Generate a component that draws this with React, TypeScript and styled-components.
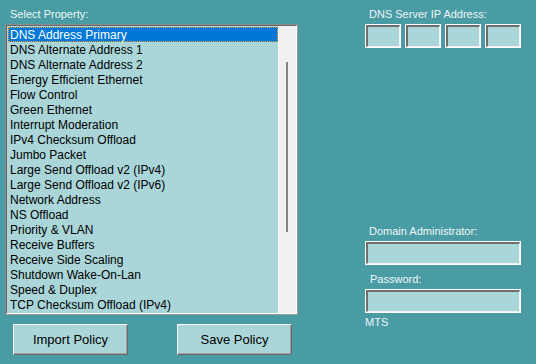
import React from "react";
import styled, { createGlobalStyle } from "styled-components";

const Global = createGlobalStyle`
  html, body { margin: 0; padding: 0; }
  body { background: #4a9ca4; font-family: "Liberation Sans", Arial, sans-serif; }
`;

const Window = styled.div`
  width: 536px;
  height: 364px;
  background: #4a9ca4;
  display: flex;
  box-sizing: border-box;
  overflow: hidden;
`;

const LeftColumn = styled.div`
  display: flex;
  flex-direction: column;
  padding: 8px 0 0 5px;
  width: 300px;
`;

const RightColumn = styled.div`
  display: flex;
  flex-direction: column;
  padding: 8px 0 0 60px;
  width: 160px;
`;

const Label = styled.div<{ $indent?: number }>`
  font-size: 11px;
  line-height: 13px;
  height: 13px;
  padding-top: 1px;
  margin-top: -1px;
  color: #eef6f6;
  padding-left: ${(p) => p.$indent ?? 4}px;
  margin-bottom: 3px;
  white-space: nowrap;
`;

const ListFrame = styled.div`
  width: 293px;
  height: 291px;
  box-sizing: border-box;
  border: 1px solid #8a8a8a;
  border-right-color: #9a9a9a;
  border-bottom-color: #9a9a9a;
  display: flex;
`;

const ListInner = styled.div`
  flex: 1;
  display: flex;
  box-sizing: border-box;
  border-top: 1px solid #696969;
  border-left: 1px solid #696969;
  border-right: 1px solid #ffffff;
  border-bottom: 1px solid #ffffff;
  background: #aad6d9;
  overflow: hidden;
`;

const Items = styled.div`
  width: 270px;
  padding: 1px 0 0 1px;
  background: #aad6d9;
`;

const Item = styled.div<{ $selected?: boolean }>`
  height: 15px;
  line-height: 13px;
  padding-top: 2px;
  font-size: 12px;
  padding-left: 2px;
  white-space: nowrap;
  box-sizing: border-box;
  color: ${(p) => (p.$selected ? "#ffffff" : "#000000")};
  background: ${(p) => (p.$selected ? "#0078d7" : "transparent")};
  outline: ${(p) => (p.$selected ? "1px dotted #f0a030" : "none")};
  outline-offset: -1px;
`;

const Track = styled.div`
  flex: 1;
  background: #f0f0f0;
  border-left: 1px solid #f8f8f8;
  position: relative;
`;

const Thumb = styled.div`
  position: absolute;
  left: 7px;
  top: 36px;
  width: 2px;
  height: 170px;
  background: #858585;
`;

const ButtonRow = styled.div`
  display: flex;
  gap: 49px;
  padding-left: 8px;
  margin-top: 9px;
`;

const Button = styled.div`
  width: 115px;
  height: 31px;
  box-sizing: border-box;
  background: #aad6d9;
  border-top: 1px solid #ffffff;
  border-left: 1px solid #ffffff;
  border-right: 1px solid #696969;
  border-bottom: 1px solid #696969;
  box-shadow: inset -1px -1px 0 #a0a0a0;
  display: flex;
  align-items: center;
  justify-content: center;
  font-size: 13px;
  color: #000;
`;

const IpRow = styled.div`
  display: flex;
  gap: 4px;
`;

const Field = styled.div<{ $width: number }>`
  width: ${(p) => p.$width}px;
  height: 24px;
  box-sizing: border-box;
  border: 1px solid #ffffff;
  display: flex;
`;

const FieldInner = styled.div`
  flex: 1;
  box-sizing: border-box;
  background: #aad6d9;
  border-top: 2px solid #6e6e6e;
  border-left: 2px solid #6e6e6e;
  border-right: 1px solid #f4f4f4;
  border-bottom: 1px solid #f4f4f4;
`;

const LoginSection = styled.div`
  display: flex;
  flex-direction: column;
  margin-top: 177px;
`;

const Spacer = styled.div<{ $h: number }>`
  height: ${(p) => p.$h}px;
`;

const items = [
  "DNS Address Primary",
  "DNS Alternate Address 1",
  "DNS Alternate Address 2",
  "Energy Efficient Ethernet",
  "Flow Control",
  "Green Ethernet",
  "Interrupt Moderation",
  "IPv4 Checksum Offload",
  "Jumbo Packet",
  "Large Send Offload v2 (IPv4)",
  "Large Send Offload v2 (IPv6)",
  "Network Address",
  "NS Offload",
  "Priority & VLAN",
  "Receive Buffers",
  "Receive Side Scaling",
  "Shutdown Wake-On-Lan",
  "Speed & Duplex",
  "TCP Checksum Offload (IPv4)",
];

export default function App() {
  return (
    <>
      <Global />
      <Window>
        <LeftColumn>
          <Label $indent={5}>Select Property:</Label>
          <ListFrame>
            <ListInner>
              <Items>
                {items.map((t, i) => (
                  <Item key={t} $selected={i === 0}>
                    {t}
                  </Item>
                ))}
              </Items>
              <Track>
                <Thumb />
              </Track>
            </ListInner>
          </ListFrame>
          <ButtonRow>
            <Button>Import Policy</Button>
            <Button>Save Policy</Button>
          </ButtonRow>
        </LeftColumn>
        <RightColumn>
          <Label>DNS Server IP Address:</Label>
          <IpRow>
            {[0, 1, 2, 3].map((i) => (
              <Field key={i} $width={36}>
                <FieldInner />
              </Field>
            ))}
          </IpRow>
          <LoginSection>
            <Label>Domain Administrator:</Label>
            <Field $width={156}>
              <FieldInner />
            </Field>
            <Spacer $h={8} />
            <Label $indent={5}>Password:</Label>
            <Field $width={156}>
              <FieldInner />
            </Field>
            <Spacer $h={3} />
            <Label $indent={0}>MTS</Label>
          </LoginSection>
        </RightColumn>
      </Window>
    </>
  );
}
